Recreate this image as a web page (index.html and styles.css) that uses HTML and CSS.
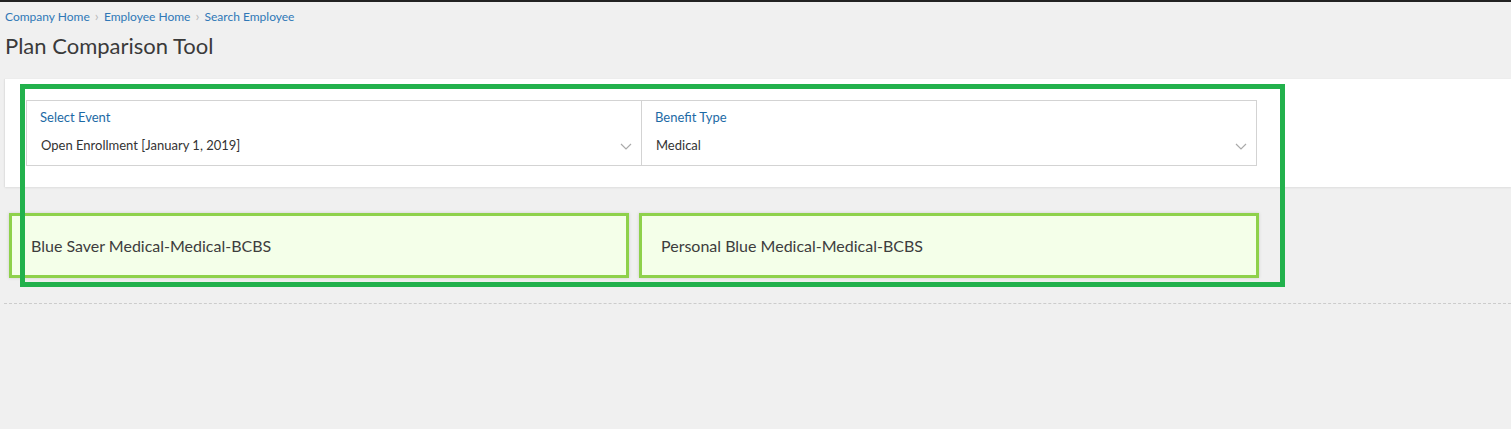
FILE: index.html
```html
<!DOCTYPE html>
<html lang="en">
<head>
  <meta charset="UTF-8" />
  <title>Plan Comparison Tool</title>
  <link rel="stylesheet" href="styles.css">
</head>
<body>
  <div class="topbar"></div>

  <nav class="breadcrumb">
    <a href="#">Company Home</a>
    <span class="sep">&#8250;</span>
    <a href="#">Employee Home</a>
    <span class="sep">&#8250;</span>
    <a href="#">Search Employee</a>
  </nav>

  <h1 class="page-title">Plan Comparison Tool</h1>

  <section class="filter-panel">
    <div class="filter-row">
      <div class="filter">
        <label>Select Event</label>
        <div class="value">Open Enrollment [January 1, 2019]</div>
        <svg class="chevron" width="12" height="7" viewBox="0 0 12 7"><path d="M1 1 L6 6 L11 1" fill="none" stroke="#aaa" stroke-width="1.2"/></svg>
      </div>
      <div class="filter">
        <label>Benefit Type</label>
        <div class="value">Medical</div>
        <svg class="chevron" width="12" height="7" viewBox="0 0 12 7"><path d="M1 1 L6 6 L11 1" fill="none" stroke="#aaa" stroke-width="1.2"/></svg>
      </div>
    </div>
  </section>

  <div class="plans">
    <div class="plan">Blue Saver Medical-Medical-BCBS</div>
    <div class="plan">Personal Blue Medical-Medical-BCBS</div>
  </div>

  <hr class="divider">

  <div class="highlight"></div>
</body>
</html>
```

FILE: styles.css
```css
body {
  font-family: Lato, "Open Sans", sans-serif;
  margin: 0;
  padding: 0;
  background: #f0f0f0;
  color: #333;
  position: relative;
  min-height: 429px;
}
.topbar {
  height: 2px;
  background: #222;
}
.breadcrumb {
  padding: 7px 5px 0;
  font-size: 12px;
  line-height: 14px;
}
.breadcrumb a {
  color: #2f78b7;
  text-decoration: none;
}
.breadcrumb .sep {
  color: #bbb;
  font-size: 14px;
  margin: 0 2px;
}
.page-title {
  font-size: 22px;
  font-weight: normal;
  color: #3a3a3a;
  margin: 9px 5px 0;
  line-height: 26px;
}
.filter-panel {
  background: #fff;
  margin: 20px 0 0 5px;
  padding: 21px;
  box-shadow: 0 1px 2px #ddd, -1px 0 1px #e4e4e4;
}
.filter-row {
  display: flex;
  width: 1231px;
  height: 66px;
  box-sizing: border-box;
  border: 1px solid #d3d3d3;
}
.filter {
  flex: 1;
  position: relative;
  padding: 8px 13px 0;
}
.filter + .filter {
  border-left: 1px solid #d3d3d3;
}
.filter label {
  display: block;
  font-size: 13px;
  color: #1d6aa5;
  line-height: 16px;
}
.filter .value {
  font-size: 13px;
  line-height: 16px;
  margin-top: 12px;
  padding-left: 1px;
}
.chevron {
  position: absolute;
  right: 9px;
  top: 42px;
}
.plans {
  display: flex;
  gap: 10px;
  margin: 26px 0 0 9px;
}
.plan {
  width: 620px;
  height: 65px;
  box-sizing: border-box;
  background: #f4ffe9;
  border: 3px solid #8ed14b;
  box-shadow: 0 0 3px #ccc;
  font-size: 16px;
  color: #3d3d3d;
  display: flex;
  align-items: center;
  padding-left: 19px;
}
.divider {
  border: none;
  border-top: 1px dashed #ccc;
  margin: 25px 0 0 4px;
}
.highlight {
  position: absolute;
  left: 20px;
  top: 84px;
  width: 1265px;
  height: 203px;
  box-sizing: border-box;
  border: 5px solid #22b14c;
  pointer-events: none;
}
```
